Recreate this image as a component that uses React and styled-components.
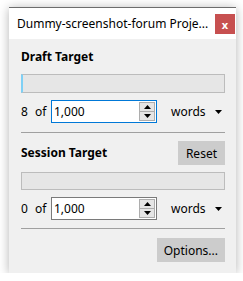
import React from "react";
import styled, { createGlobalStyle } from "styled-components";

const GlobalStyle = createGlobalStyle`
  html, body {
    margin: 0;
    background: #ffffff;
  }
  body {
    padding: 7px 0 0 9px;
    font-family: "Noto Sans", "DejaVu Sans", sans-serif;
    font-size: 12px;
    color: #000;
  }
`;

const Window = styled.div`
  width: 227px;
  height: 266px;
  box-sizing: border-box;
  display: flex;
  flex-direction: column;
  background: #f0f0f0;
  box-shadow: 0 1px 10px rgba(0, 0, 0, 0.3);
`;

const TitleBar = styled.div`
  height: 32px;
  box-sizing: border-box;
  border-top: 1px solid #6d6d6d;
  background: #ffffff;
  display: flex;
  align-items: center;
  padding-left: 8px;
  gap: 3px;
`;

const Title = styled.div`
  flex: 1;
  white-space: nowrap;
  overflow: hidden;
  font-size: 12px;
  color: #000;
`;

const CloseButton = styled.div`
  width: 20px;
  height: 20px;
  margin-right: 1px;
  margin-top: 1px;
  background: #c75050;
  color: #fff;
  font-weight: bold;
  font-size: 11px;
  display: flex;
  align-items: center;
  justify-content: center;
`;

const Body = styled.div`
  flex: 1;
  display: flex;
  flex-direction: column;
  padding: 10px 11px 0 12px;
`;

const Heading = styled.div`
  font-weight: bold;
  font-size: 12px;
  line-height: 16px;
`;

const HeaderRow = styled.div`
  display: flex;
  align-items: center;
  justify-content: space-between;
  margin-top: ${(p) => p.$mt}px;
`;

const Bar = styled.div`
  height: ${(p) => p.$h}px;
  box-sizing: border-box;
  margin-top: ${(p) => p.$mt}px;
  border: 1px solid #bcbcbc;
  background: #e6e6e6;
  ${(p) => p.$chunk && `border-left: 2px solid #7fd0f5;`}
`;

const CountRow = styled.div`
  display: flex;
  align-items: center;
  margin-top: 7px;
  height: 23px;
`;

const Count = styled.span`
  width: 14px;
`;

const Of = styled.span`
  width: 16px;
`;

const SpinBox = styled.div`
  width: 106px;
  height: 23px;
  box-sizing: border-box;
  border: 1px solid ${(p) => (p.$focused ? "#0078d7" : "#7a7a7a")};
  background: #fff;
  display: flex;
  align-items: center;
  padding: 0 1px 0 2px;
`;

const SpinValue = styled.span`
  flex: 1;
  font-size: 12px;
`;

const SpinButtons = styled.div`
  width: 16px;
  height: 19px;
  display: flex;
  flex-direction: column;
  border: 1px solid #adadad;
  box-sizing: border-box;
  background: #e5e5e5;
`;

const SpinHalf = styled.div`
  flex: 1;
  display: flex;
  align-items: center;
  justify-content: center;
  ${(p) => p.$top && `border-bottom: 1px solid #adadad;`}
`;

const Combo = styled.div`
  flex: 1;
  display: flex;
  align-items: center;
  justify-content: space-between;
  padding-left: 14px;
  padding-right: 3px;
`;

const Separator = styled.div`
  height: 1px;
  background: #a0a0a0;
  margin-top: ${(p) => p.$mt}px;
`;

const Button = styled.div`
  height: 24px;
  box-sizing: border-box;
  padding: 0 ${(p) => p.$px}px;
  background: #cccccc;
  display: flex;
  align-items: center;
  font-size: 12px;
`;

const Footer = styled.div`
  display: flex;
  justify-content: flex-end;
  margin-top: 9px;
`;

const Tri = ({ up }) => (
  <svg width="7" height="4" viewBox="0 0 7 4">
    <polygon points={up ? "3.5,0 7,4 0,4" : "0,0 7,0 3.5,4"} fill="#000" />
  </svg>
);

const TargetRow = ({ count, focused }) => (
  <CountRow>
    <Count>{count}</Count>
    <Of>of</Of>
    <SpinBox $focused={focused}>
      <SpinValue>1,000</SpinValue>
      <SpinButtons>
        <SpinHalf $top>
          <Tri up />
        </SpinHalf>
        <SpinHalf>
          <Tri />
        </SpinHalf>
      </SpinButtons>
    </SpinBox>
    <Combo>
      <span>words</span>
      <Tri />
    </Combo>
  </CountRow>
);

export default function App() {
  return (
    <>
      <GlobalStyle />
      <Window>
        <TitleBar>
          <Title>Dummy-screenshot-forum Proje...</Title>
          <CloseButton>x</CloseButton>
        </TitleBar>
        <Body>
          <Heading>Draft Target</Heading>
          <Bar $h={19} $mt={9} $chunk />
          <TargetRow count="8" focused />
          <Separator $mt={9} />
          <HeaderRow $mt={8}>
            <Heading>Session Target</Heading>
            <Button $px={8}>Reset</Button>
          </HeaderRow>
          <Bar $h={18} $mt={7} />
          <TargetRow count="0" />
          <Separator $mt={8} />
          <Footer>
            <Button $px={7}>Options...</Button>
          </Footer>
        </Body>
      </Window>
    </>
  );
}
